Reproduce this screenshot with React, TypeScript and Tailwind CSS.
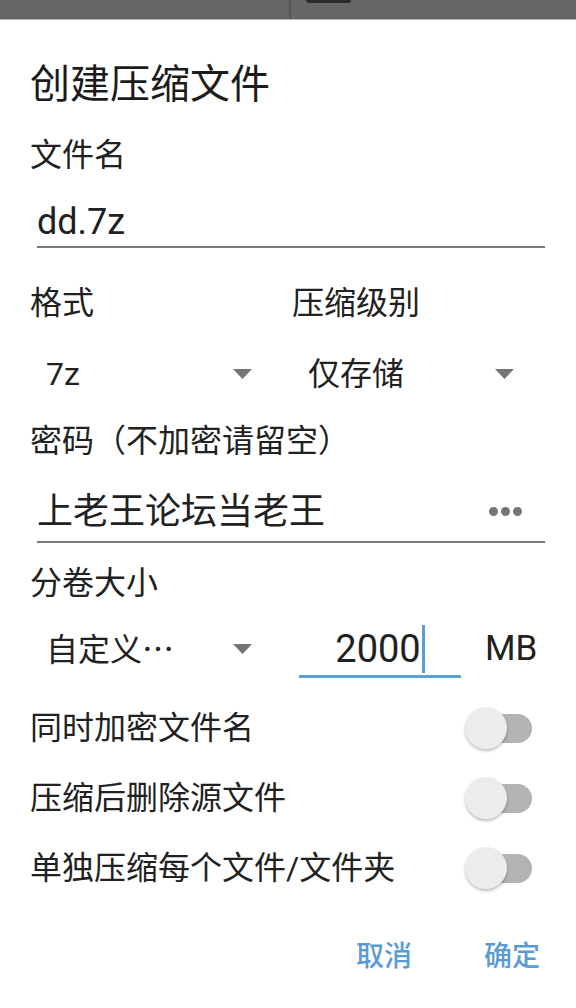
import React from "react";

const font = { fontFamily: "Roboto, 'Noto Sans CJK SC', sans-serif" };

function Caret() {
  return (
    <svg width="19" height="10" viewBox="0 0 19 10" className="shrink-0">
      <path d="M0 0 L19 0 L9.5 10 Z" fill="#757575" />
    </svg>
  );
}

function Dropdown({ value, ellipsis }: { value: string; ellipsis?: boolean }) {
  return (
    <div className="ml-[16px] w-[206px] flex items-center justify-between">
      <span className="text-[32px] leading-none text-[#212121]">
        {value}
        {ellipsis && <span className="font-['Noto_Sans_CJK_SC']">…</span>}
      </span>
      <Caret />
    </div>
  );
}

function Toggle() {
  return (
    <div className="relative w-[67px] h-[42px]">
      <div className="absolute right-0 top-[7px] w-[58px] h-[29px] rounded-full bg-[#b3b3b3]" />
      <div className="absolute left-0 top-0 w-[42px] h-[42px] rounded-full bg-[#ececec] shadow-[0_2px_3px_rgba(0,0,0,0.25)]" />
    </div>
  );
}

function ToggleRow({ label }: { label: string }) {
  return (
    <div className="h-[70px] pl-[30px] pr-[44px] flex items-center justify-between">
      <span className="text-[32px] leading-none text-[#212121]">{label}</span>
      <Toggle />
    </div>
  );
}

export default function App() {
  return (
    <div className="w-[576px] h-[1008px] bg-white overflow-hidden [text-spacing-trim:space-all]" style={font}>
      <div className="h-[20px] bg-[#666666] border-b border-[#b5b5b5] flex">
        <div className="w-[291px] border-r-2 border-[#555555]" />
        <div className="ml-[15px] w-[45px] h-[3px] rounded-b bg-[#2a2a2a]" />
      </div>

      <div className="mt-[40px] h-[50px] pl-[30px] flex items-center">
        <span className="text-[40px] leading-none text-[#1c1c1c]">创建压缩文件</span>
      </div>

      <div className="mt-[25px] h-[40px] pl-[30px] flex items-center">
        <span className="text-[32px] leading-none text-[#212121]">文件名</span>
      </div>

      <div className="mt-[22px] ml-[37px] w-[508px] h-[51px] border-b-2 border-[#7a7a7a] flex items-center">
        <span className="text-[36px] leading-none text-[#212121]">dd.7z</span>
      </div>

      <div className="mt-[35px] h-[40px] grid grid-cols-[262px_1fr] pl-[30px] items-center">
        <span className="text-[32px] leading-none text-[#212121]">格式</span>
        <span className="text-[32px] leading-none text-[#212121]">压缩级别</span>
      </div>

      <div className="mt-[26px] h-[50px] grid grid-cols-[262px_1fr] pl-[30px] items-center">
        <Dropdown value="7z" />
        <Dropdown value="仅存储" />
      </div>

      <div className="mt-[22px] h-[40px] pl-[30px] flex items-center">
        <span className="text-[32px] leading-none text-[#212121]">密码（不加密请留空）</span>
      </div>

      <div className="mt-[21px] ml-[37px] w-[508px] h-[61px] border-b-2 border-[#7a7a7a] flex items-center justify-between pr-[23px]">
        <span className="text-[36px] leading-none text-[#212121]">上老王论坛当老王</span>
        <div className="flex gap-[3px]">
          <span className="w-[9px] h-[9px] rounded-full bg-[#757575]" />
          <span className="w-[9px] h-[9px] rounded-full bg-[#757575]" />
          <span className="w-[9px] h-[9px] rounded-full bg-[#757575]" />
        </div>
      </div>

      <div className="mt-[20px] h-[40px] pl-[30px] flex items-center">
        <span className="text-[32px] leading-none text-[#212121]">分卷大小</span>
      </div>

      <div className="mt-[19px] h-[56px] pl-[30px] flex items-start">
        <div className="w-[262px] h-[53px] flex items-center">
          <Dropdown value="自定义" ellipsis />
        </div>
        <div className="ml-[7px] w-[162px] h-[56px] border-b-[3px] border-[#5b9fd7] flex items-center justify-center">
          <span className="text-[38px] leading-none text-[#212121]">2000</span>
          <span className="ml-[1px] w-[3px] h-[48px] bg-[#5b9fd7]" />
        </div>
        <div className="ml-[24px] h-[53px] flex items-center">
          <span className="text-[35px] leading-none text-[#212121]">MB</span>
        </div>
      </div>

      <div className="mt-[15px]">
        <ToggleRow label="同时加密文件名" />
        <ToggleRow label="压缩后删除源文件" />
        <ToggleRow label="单独压缩每个文件/文件夹" />
      </div>

      <div className="mt-[29px] h-[50px] pr-[36px] flex items-center justify-end gap-[72px]">
        <span className="text-[28px] leading-none font-medium text-[#5b9bd5]">取消</span>
        <span className="text-[28px] leading-none font-medium text-[#5b9bd5]">确定</span>
      </div>
    </div>
  );
}
